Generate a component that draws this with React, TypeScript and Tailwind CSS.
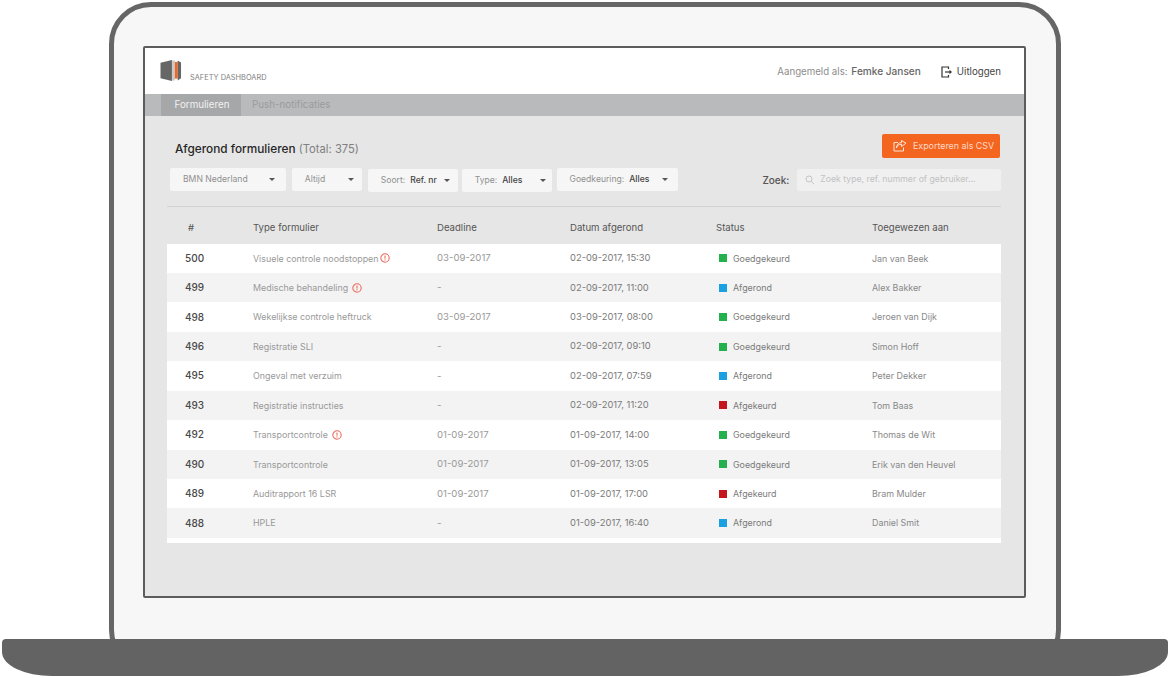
import React from "react";

const rows = [
  ["500", "Visuele controle noodstoppen", "03-09-2017", "02-09-2017, 15:30", "g", "Jan van Beek", 1],
  ["499", "Medische behandeling", "-", "02-09-2017, 11:00", "a", "Alex Bakker", 4],
  ["498", "Wekelijkse controle heftruck", "03-09-2017", "03-09-2017, 08:00", "g", "Jeroen van Dijk", 0],
  ["496", "Registratie SLI", "-", "02-09-2017, 09:10", "g", "Simon Hoff", 0],
  ["495", "Ongeval met verzuim", "-", "02-09-2017, 07:59", "a", "Peter Dekker", 0],
  ["493", "Registratie instructies", "-", "02-09-2017, 11:20", "r", "Tom Baas", 0],
  ["492", "Transportcontrole", "01-09-2017", "01-09-2017, 14:00", "g", "Thomas de Wit", 4],
  ["490", "Transportcontrole", "01-09-2017", "01-09-2017, 13:05", "g", "Erik van den Heuvel", 0],
  ["489", "Auditrapport 16 LSR", "01-09-2017", "01-09-2017, 17:00", "r", "Bram Mulder", 0],
  ["488", "HPLE", "-", "01-09-2017, 16:40", "a", "Daniel Smit", 0],
] as const;

const statusMap = {
  g: { label: "Goedgekeurd", cls: "bg-[#22b14c]" },
  a: { label: "Afgerond", cls: "bg-[#1ba1e2]" },
  r: { label: "Afgekeurd", cls: "bg-[#c4161c]" },
};

function Caret() {
  return <span className="w-0 h-0 border-x-[3.5px] border-x-transparent border-t-[3.5px] border-t-[#555]" />;
}

function Alert({ ml }: { ml: number }) {
  return (
    <svg width="10" height="10" viewBox="0 0 11 11" style={{ marginLeft: ml }} className="shrink-0">
      <circle cx="5.5" cy="5.5" r="4.6" fill="none" stroke="#ea6a5e" strokeWidth="1.2" />
      <rect x="4.9" y="2.8" width="1.2" height="3.4" fill="#ea6a5e" />
      <rect x="4.9" y="7" width="1.2" height="1.2" fill="#ea6a5e" />
    </svg>
  );
}

function Select({ cls, label, value }: { cls: string; label: string; value?: string }) {
  return (
    <div className={`${cls} h-[23px] bg-[#f6f6f6] rounded-[2px] flex items-center justify-between pl-[13px] text-[8.6px] text-[#909090]`}>
      <span className="whitespace-nowrap">
        {label}
        {value && <span className="ml-[5px] font-medium text-[#444]">{value}</span>}
      </span>
      <Caret />
    </div>
  );
}

const cols = "grid grid-cols-[86px_184px_133px_146px_156px_1fr] items-center";

export default function App() {
  return (
    <div className="w-[1170px] h-[678px] bg-white overflow-hidden flex flex-col items-center font-['Inter',sans-serif]">
      <div className="w-[952px] h-[670px] shrink-0 mt-[2px] border-[5px] border-[#666666] rounded-[42px] bg-[#f8f7f8] pt-[39px] pl-[29px]">
        <div className="w-[883px] h-[552px] border-2 border-[#5c5c5c] rounded-[2px] bg-[#e6e6e6] flex flex-col overflow-hidden">
          <header className="h-[46px] shrink-0 bg-white flex items-center justify-between pl-[15px] pr-[23px]">
            <div className="flex items-start mt-[2px]">
              <svg width="22" height="21" viewBox="0 0 22 22">
                <path d="M0 3 L12 0 V22 L0 19 Z" fill="#666666" />
                <rect x="12" y="0.5" width="3" height="21" fill="#c9c9c9" />
                <rect x="15" y="2" width="3" height="17.5" fill="#f26522" />
                <path d="M18 0.5 L21.5 2.5 V19 L18 21.5 Z" fill="#666666" />
              </svg>
              <span className="ml-[8px] mt-[12px] text-[7.4px] leading-[12px] text-[#808080] whitespace-nowrap">SAFETY DASHBOARD</span>
            </div>
            <div className="flex items-center mt-[2px]">
              <span className="text-[9.7px] text-[#8c8c8c]">
                Aangemeld als: <span className="ml-[1px] text-[10.1px] font-medium text-[#666]">Femke Jansen</span>
              </span>
              <svg width="12" height="12" viewBox="0 0 12 12" className="ml-[20px]" fill="none" stroke="#333" strokeWidth="1.2">
                <path d="M7.5 3 V1 H1 V11 H7.5 V9" />
                <path d="M4 6 H9" />
                <path d="M8.5 3.8 L11 6 L8.5 8.2 Z" fill="#333" stroke="none" />
              </svg>
              <span className="ml-[4px] text-[9.7px] text-[#444]">Uitloggen</span>
            </div>
          </header>

          <nav className="h-[22px] shrink-0 bg-[#b9babc] pl-[16px] flex items-stretch text-[9.8px]">
            <div className="w-[80px] bg-[#a6a7a9] text-[#f2f2f2] flex items-center justify-center pl-[2px] pt-[1px]">Formulieren</div>
            <div className="ml-[11px] text-[#9a9a9c] flex items-center pt-[1px]">Push-notificaties</div>
          </nav>

          <main className="flex-1 pl-[22px] pr-[23px] flex flex-col">
            <div className="h-[34px] mt-[18px] flex items-start justify-between shrink-0">
              <h1 className="mt-[7px] ml-[8px] text-[11.8px] leading-[16px] font-medium text-[#262626]">
                Afgerond formulieren <span className="font-normal text-[#808080] text-[11.2px]">(Total: 375)</span>
              </h1>
              <button className="w-[118px] h-[24px] mr-[1px] rounded-[2px] bg-[#f4651f] flex items-center pl-[11px] text-[8.9px] text-[#ffd9c6]">
                <svg width="14" height="12" viewBox="0 0 14 12" fill="none" stroke="#ffe6da" strokeWidth="1" className="mr-[6px]">
                  <path d="M5 2.5 H1 V11 H10.5 V7.5" />
                  <path d="M3.5 8 C4 5.5 6 4.2 8.5 4.2 V6.5 L13 3.2 L8.5 0.5 V2.5 C5.5 2.5 3.5 5 3.5 8 Z" />
                </svg>
                Exporteren als CSV
              </button>
            </div>

            <div className="h-[24px] flex items-start pl-[3px] shrink-0">
              <Select cls="w-[116px] pr-[11px]" label="BMN Nederland" />
              <Select cls="w-[70px] ml-[6px] pr-[8px]" label="Altijd" />
              <Select cls="w-[90px] ml-[6px] mt-[1px] pr-[8px]" label="Soort:" value="Ref. nr" />
              <Select cls="w-[90px] ml-[4px] mt-[1px] pr-[6px]" label="Type:" value="Alles" />
              <Select cls="w-[122px] ml-[5px] pr-[10px]" label="Goedkeuring:" value="Alles" />
              <span className="ml-[84px] mt-[5px] text-[10px] leading-[14px] font-medium text-[#555]">Zoek:</span>
              <div className="ml-[8px] mt-[1px] w-[204px] h-[22px] bg-[#f0f0f0] rounded-[2px] flex items-center pl-[8px] text-[8.7px] text-[#c2c2c2]">
                <svg width="10" height="10" viewBox="0 0 10 10" fill="none" stroke="#c4c4c4" strokeWidth="1" className="mr-[5px]">
                  <circle cx="4" cy="4" r="3" />
                  <path d="M6.2 6.2 L9.2 9.2" />
                </svg>
                Zoek type, ref. nummer of gebruiker...
              </div>
            </div>

            <div className="h-px bg-[#d3d3d3] mt-[14px] shrink-0" />

            <div className={`h-[36.5px] shrink-0 ${cols} text-[9.6px] text-[#555] pt-[6px]`}>
              <span className="pl-[21px]">#</span>
              <span>Type formulier</span>
              <span>Deadline</span>
              <span>Datum afgerond</span>
              <span>Status</span>
              <span>Toegewezen aan</span>
            </div>

            <div className="bg-white pb-[5px]">
              {rows.map((r, i) => (
                <div key={r[0]} className={`h-[29.45px] ${cols} text-[8.9px] ${i % 2 ? "bg-[#f3f3f3]" : "bg-white"}`}>
                  <span className="pl-[18px] text-[10px] font-medium text-[#4a4a4a]">{r[0]}</span>
                  <span className="flex items-center text-[#999]">
                    {r[1]}
                    {r[6] ? <Alert ml={r[6]} /> : null}
                  </span>
                  <span className="text-[9.6px] text-[#999]">{r[2]}</span>
                  <span className="text-[9.4px] text-[#7a7a7a]">{r[3]}</span>
                  <span className="flex items-center pl-[3px] text-[#7a7a7a]">
                    <span className={`w-[8px] h-[8px] mr-[6px] ${statusMap[r[4]].cls}`} />
                    {statusMap[r[4]].label}
                  </span>
                  <span className="text-[#888]">{r[5]}</span>
                </div>
              ))}
            </div>
          </main>
        </div>
      </div>
      <div className="relative z-10 -mt-[33px] w-[1166px] h-[37px] shrink-0 bg-[#636363] rounded-tl-[4px] rounded-tr-[4px] rounded-bl-[50px_24px] rounded-br-[50px_24px]" />
    </div>
  );
}
